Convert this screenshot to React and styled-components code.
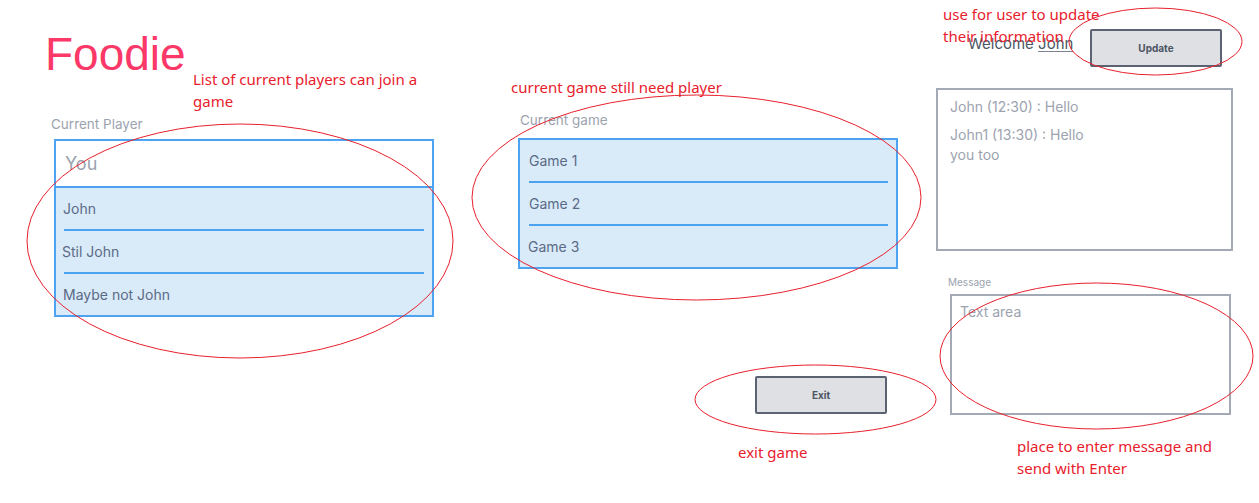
import React from 'react'
import styled, { createGlobalStyle } from 'styled-components'

const GlobalStyle = createGlobalStyle`
  html, body {
    margin: 0;
    padding: 0;
    background: #ffffff;
  }
  body {
    font-family: Inter, 'Liberation Sans', sans-serif;
  }
`

const players = ['John', 'Stil John', 'Maybe not John']
const games = ['Game 1', 'Game 2', 'Game 3']
const messages = [
  ['John (12:30) : Hello'],
  ['John1 (13:30) : Hello', 'you too'],
]

const notes = [
  { left: 193, top: 68, lines: ['List of current players can join a', 'game'] },
  { left: 511, top: 76, lines: ['current game still need player'] },
  { left: 943, top: 3, lines: ['use for user to update', 'their information'] },
  { left: 738, top: 441, lines: ['exit game'] },
  { left: 1017, top: 435, lines: ['place to enter message and', 'send with Enter'] },
]

const rings = [
  { cx: 240, cy: 241, rx: 213, ry: 117 },
  { cx: 696.5, cy: 197.5, rx: 224.5, ry: 102.5 },
  { cx: 1155.5, cy: 41.5, rx: 86.5, ry: 33.5 },
  { cx: 815.5, cy: 399.5, rx: 120.5, ry: 34.5 },
  { cx: 1096.5, cy: 356, rx: 156.5, ry: 73 },
]

const Page = styled.div`
  position: relative;
  width: 1259px;
  height: 503px;
  overflow: hidden;
`

const Board = styled.div`
  display: flex;
  align-items: flex-start;
`

const Column = styled.div`
  display: flex;
  flex-direction: column;
  align-items: flex-start;
  width: ${(p) => p.width}px;
  margin-left: ${(p) => p.offset}px;
`

const Title = styled.h1`
  margin: 31px 0 0 -1px;
  font-family: 'Liberation Sans', Arial, sans-serif;
  font-weight: 400;
  font-size: 46px;
  line-height: 46px;
  color: #fb3868;
`

const FieldLabel = styled.div`
  margin: ${(p) => p.top}px 0 ${(p) => p.bottom}px ${(p) => p.indent}px;
  font-size: ${(p) => (p.small ? 10 : 13.5)}px;
  line-height: ${(p) => (p.small ? 12 : 16)}px;
  color: #9ca3af;
`

const ListBox = styled.div`
  width: 380px;
  margin-left: ${(p) => p.indent}px;
  border: 2px solid #4da3ef;
  box-sizing: border-box;
  background: #d9eaf9;
`

const InputRow = styled.div`
  height: 45px;
  display: flex;
  align-items: center;
  padding-left: 9px;
  background: #ffffff;
  border-bottom: 2px solid #4da3ef;
  font-size: 18px;
  color: #9ca3af;
`

const Row = styled.div`
  height: 41px;
  display: flex;
  align-items: center;
  padding-left: ${(p) => p.pad}px;
  font-size: 14px;
  color: #5b6b86;
`

const Divider = styled.div`
  height: 2px;
  margin: 0 8px 0 ${(p) => p.pad}px;
  background: #4da3ef;
`

const Button = styled.button`
  width: 132px;
  height: 38px;
  margin: ${(p) => p.margin};
  padding: 0;
  flex-shrink: 0;
  background: #dfe0e4;
  border: 2px solid #5b6272;
  border-radius: 2px;
  font-family: Inter, 'Liberation Sans', sans-serif;
  font-weight: 700;
  font-size: 10px;
  color: #4b5563;
`

const Header = styled.div`
  display: flex;
  align-items: flex-start;
  width: 100%;
  height: 38px;
  margin-top: 29px;
  padding-left: 32px;
  box-sizing: border-box;
`

const Welcome = styled.div`
  margin-top: 6px;
  font-size: 15px;
  line-height: 18px;
  color: #4b5563;

  u {
    text-decoration-color: #7b8494;
    text-underline-offset: 2px;
  }
`

const Chat = styled.div`
  width: 297px;
  height: 163px;
  margin-top: 21px;
  padding: 7px 12px;
  box-sizing: border-box;
  border: 2px solid #a3a9b5;
  display: flex;
  flex-direction: column;
  gap: 8px;
`

const Message = styled.div`
  font-size: 14px;
  line-height: 20px;
  color: #9ca3af;
`

const TextArea = styled.textarea`
  width: 281px;
  height: 121px;
  margin-left: 14px;
  padding: 6px 8px;
  box-sizing: border-box;
  border: 2px solid #a3a9b5;
  border-radius: 0;
  resize: none;
  font-family: Inter, 'Liberation Sans', sans-serif;
  font-size: 14px;
  line-height: 20px;
  color: #4b5563;

  &::placeholder {
    color: #9ca3af;
  }
`

const Overlay = styled.div`
  position: absolute;
  inset: 0;
  pointer-events: none;
`

const Rings = styled.svg`
  position: absolute;
  inset: 0;
`

const Note = styled.div`
  position: absolute;
  left: ${(p) => p.left}px;
  top: ${(p) => p.top}px;
  font-family: 'Noto Sans', 'Open Sans', sans-serif;
  font-size: 15px;
  line-height: 22px;
  color: #e8202c;
  white-space: nowrap;
`

const App = () => {
  return (
    <Page>
      <GlobalStyle />
      <Board>
        <Column width={390} offset={46}>
          <Title>Foodie</Title>
          <FieldLabel top={39} bottom={7} indent={5}>
            Current Player
          </FieldLabel>
          <ListBox indent={8}>
            <InputRow>You</InputRow>
            {players.map((name, i) => (
              <React.Fragment key={name}>
                {i > 0 && <Divider pad={8} />}
                <Row pad={i === 1 ? 6 : 7}>{name}</Row>
              </React.Fragment>
            ))}
          </ListBox>
        </Column>

        <Column width={380} offset={82}>
          <FieldLabel top={112} bottom={10} indent={2}>
            Current game
          </FieldLabel>
          <ListBox indent={0}>
            {games.map((game, i) => (
              <React.Fragment key={game}>
                {i > 0 && <Divider pad={9} />}
                <Row pad={i === 2 ? 8 : 9}>{game}</Row>
              </React.Fragment>
            ))}
          </ListBox>
          <Button margin="107px 0 0 237px">Exit</Button>
        </Column>

        <Column width={297} offset={38}>
          <Header>
            <Welcome>
              Welcome <u>John</u>
            </Welcome>
            <Button margin="0 11px 0 auto">Update</Button>
          </Header>
          <Chat>
            {messages.map((lines) => (
              <Message key={lines[0]}>
                {lines.map((line) => (
                  <div key={line}>{line}</div>
                ))}
              </Message>
            ))}
          </Chat>
          <FieldLabel small top={25} bottom={6} indent={12}>
            Message
          </FieldLabel>
          <TextArea placeholder="Text area" />
        </Column>
      </Board>

      <Overlay>
        <Rings width="1259" height="503" viewBox="0 0 1259 503">
          {rings.map((r) => (
            <ellipse
              key={r.cx}
              cx={r.cx}
              cy={r.cy}
              rx={r.rx}
              ry={r.ry}
              fill="none"
              stroke="#e8202c"
              strokeWidth="1"
            />
          ))}
        </Rings>
        {notes.map((note) => (
          <Note key={note.lines[0]} left={note.left} top={note.top}>
            {note.lines.map((line) => (
              <div key={line}>{line}</div>
            ))}
          </Note>
        ))}
      </Overlay>
    </Page>
  )
}

export default App
